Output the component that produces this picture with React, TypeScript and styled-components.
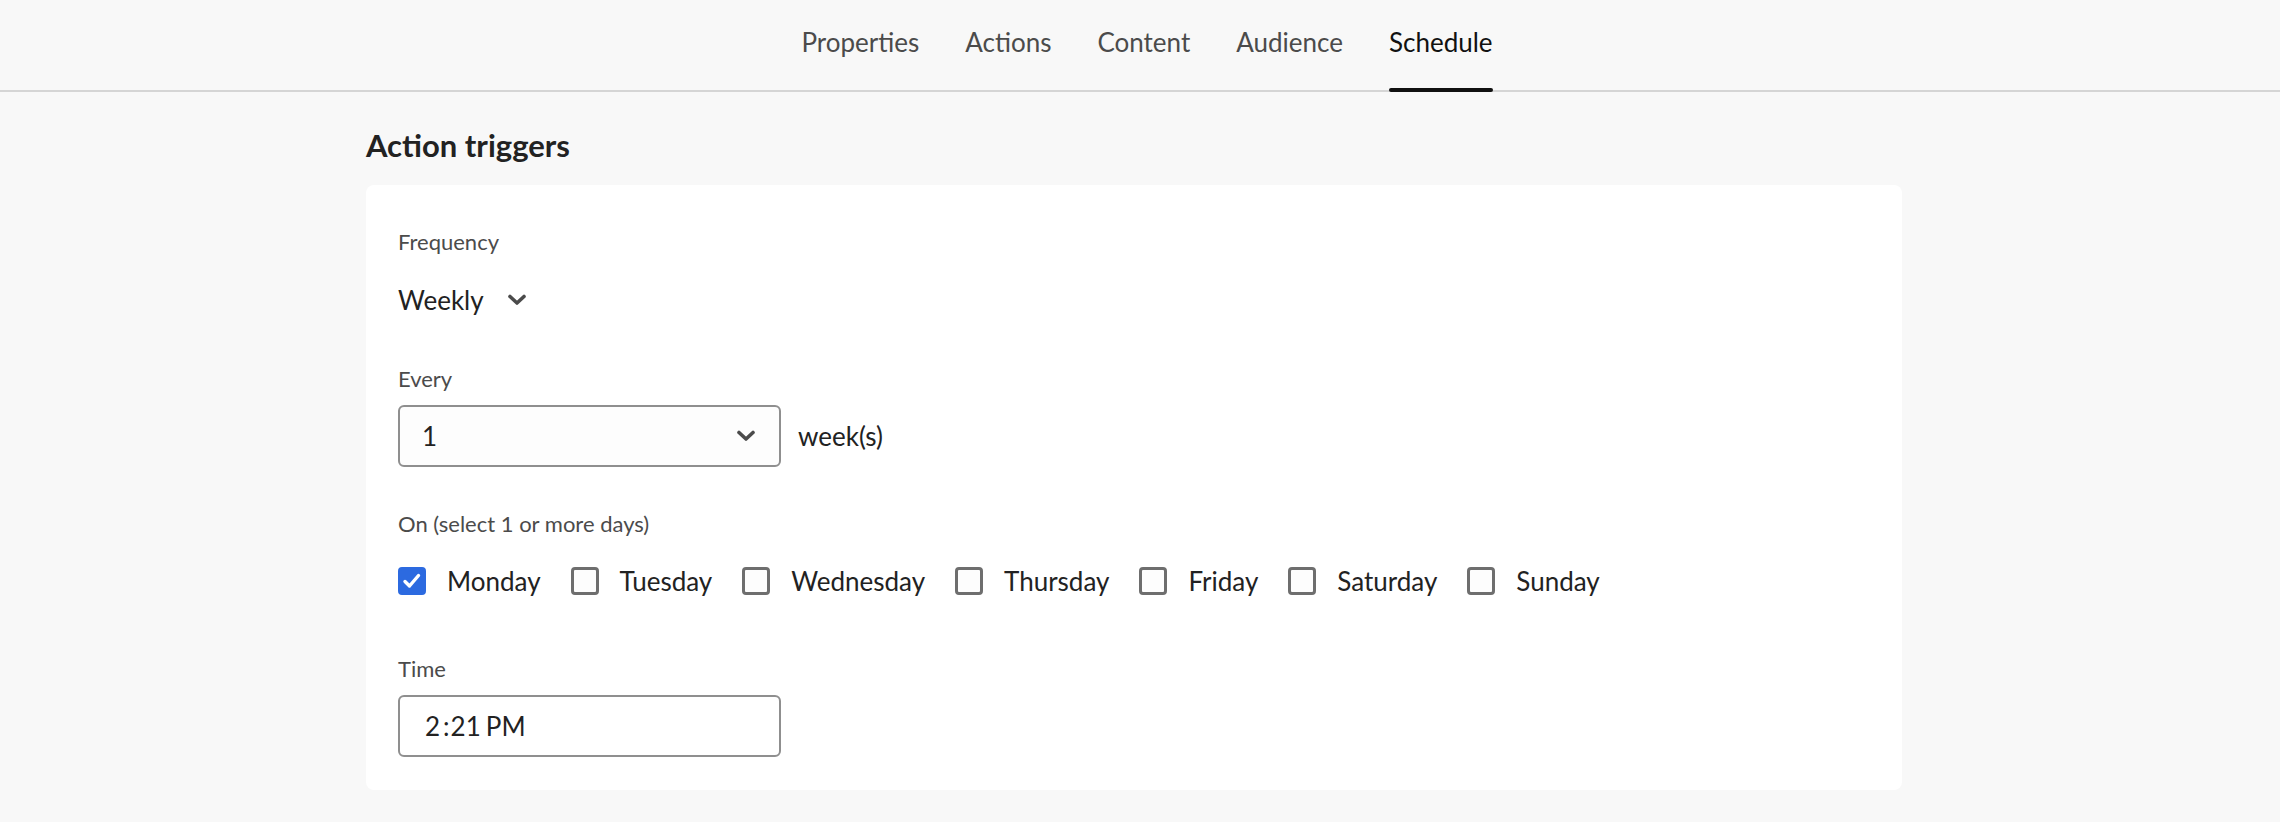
import React from "react";
import styled, { createGlobalStyle } from "styled-components";

const GlobalStyle = createGlobalStyle`
  html, body {
    margin: 0;
    padding: 0;
    background: #f8f8f8;
    font-family: Lato, "Noto Sans", "Open Sans", sans-serif;
    color: #222222;
  }
  * { box-sizing: border-box; }
`;

const Page = styled.div`
  min-height: 822px;
  background: #f8f8f8;
`;

const TabBar = styled.nav`
  height: 92px;
  border-bottom: 2px solid #d5d5d5;
  display: flex;
  justify-content: center;
  padding-left: 14px;
`;

const TabList = styled.div`
  display: flex;
  gap: 46px;
`;

const Tab = styled.div<{ $active?: boolean }>`
  position: relative;
  padding-top: 29px;
  font-size: 26px;
  line-height: 26px;
  color: ${(p) => (p.$active ? "#111111" : "#4b4b4b")};
  cursor: pointer;
  ${(p) =>
    p.$active &&
    `
    &::after {
      content: "";
      position: absolute;
      left: 0;
      right: 0;
      bottom: -2px;
      height: 4px;
      border-radius: 2px;
      background: #111111;
    }
  `}
`;

const Layout = styled.div`
  display: flex;
  justify-content: center;
  padding-right: 12px;
`;

const Main = styled.main`
  width: 1536px;
`;

const Heading = styled.h2`
  margin: 33px 0 20px;
  font-size: 31px;
  line-height: 40px;
  font-weight: 700;
  color: #222222;
`;

const Card = styled.section`
  background: #ffffff;
  border-radius: 8px;
  padding: 42px 32px 33px;
  display: flex;
  flex-direction: column;
`;

const Field = styled.div<{ $top?: number }>`
  display: flex;
  flex-direction: column;
  align-items: flex-start;
  gap: 11px;
  margin-top: ${(p) => p.$top ?? 0}px;
`;

const Label = styled.span`
  font-size: 22px;
  line-height: 30px;
  color: #4b4b4b;
`;

const QuietPicker = styled.div`
  height: 64px;
  display: flex;
  align-items: center;
  gap: 23px;
  font-size: 26px;
  color: #222222;
`;

const InlineRow = styled.div`
  display: flex;
  align-items: center;
  gap: 17px;
  font-size: 26px;
  color: #222222;
`;

const SelectBox = styled.div`
  width: 383px;
  height: 62px;
  border: 2px solid #8f8f8f;
  border-radius: 6px;
  background: #fdfdfd;
  display: flex;
  align-items: center;
  justify-content: space-between;
  padding: 0 23px 0 22px;
  font-size: 26px;
  color: #222222;
`;

const CheckRow = styled.div`
  height: 62px;
  display: flex;
  align-items: center;
  gap: 30px;
`;

const CheckItem = styled.label`
  display: flex;
  align-items: center;
  gap: 21px;
  font-size: 26px;
  color: #222222;
`;

const Box = styled.span<{ $checked?: boolean }>`
  width: 28px;
  height: 28px;
  border-radius: 4px;
  border: 3px solid ${(p) => (p.$checked ? "#2c6ae0" : "#6e6e6e")};
  background: ${(p) => (p.$checked ? "#2c6ae0" : "#fdfdfd")};
  display: flex;
  align-items: center;
  justify-content: center;
`;

const TimeBox = styled.div`
  width: 383px;
  height: 62px;
  border: 2px solid #8f8f8f;
  border-radius: 6px;
  background: #ffffff;
  display: flex;
  align-items: center;
  padding-left: 25px;
  font-size: 26px;
  color: #222222;
`;

const Segment = styled.span<{ $ml?: number }>`
  margin-left: ${(p) => p.$ml ?? 0}px;
`;

const Chevron = () => (
  <svg width="20" height="12" viewBox="0 0 20 12" fill="none">
    <path
      d="M3 2.5 L10 9 L17 2.5"
      stroke="#4b4b4b"
      strokeWidth="3.6"
      strokeLinecap="round"
      strokeLinejoin="round"
    />
  </svg>
);

const CheckMark = () => (
  <svg width="22" height="22" viewBox="0 0 22 22" fill="none">
    <path
      d="M4 11.5 L8.5 16 L17.5 5.5"
      stroke="#ffffff"
      strokeWidth="3.4"
      strokeLinecap="round"
      strokeLinejoin="round"
    />
  </svg>
);

const tabs = ["Properties", "Actions", "Content", "Audience", "Schedule"];
const days = [
  { name: "Monday", checked: true },
  { name: "Tuesday" },
  { name: "Wednesday" },
  { name: "Thursday" },
  { name: "Friday" },
  { name: "Saturday" },
  { name: "Sunday" },
];

export default function App() {
  return (
    <Page>
      <GlobalStyle />
      <TabBar>
        <TabList>
          {tabs.map((t) => (
            <Tab key={t} $active={t === "Schedule"}>
              {t}
            </Tab>
          ))}
        </TabList>
      </TabBar>
      <Layout>
        <Main>
          <Heading>Action triggers</Heading>
          <Card>
            <Field>
              <Label>Frequency</Label>
              <QuietPicker>
                <span>Weekly</span>
                <Chevron />
              </QuietPicker>
            </Field>
            <Field $top={32}>
              <Label>Every</Label>
              <InlineRow>
                <SelectBox>
                  <span>1</span>
                  <Chevron />
                </SelectBox>
                <span>week(s)</span>
              </InlineRow>
            </Field>
            <Field $top={42}>
              <Label>On (select 1 or more days)</Label>
              <CheckRow>
                {days.map((d) => (
                  <CheckItem key={d.name}>
                    <Box $checked={d.checked}>{d.checked && <CheckMark />}</Box>
                    <span>{d.name}</span>
                  </CheckItem>
                ))}
              </CheckRow>
            </Field>
            <Field $top={42}>
              <Label>Time</Label>
              <TimeBox>
                <Segment>2</Segment>
                <Segment $ml={3}>:</Segment>
                <Segment $ml={1}>21</Segment>
                <Segment $ml={5}>PM</Segment>
              </TimeBox>
            </Field>
          </Card>
        </Main>
      </Layout>
    </Page>
  );
}
